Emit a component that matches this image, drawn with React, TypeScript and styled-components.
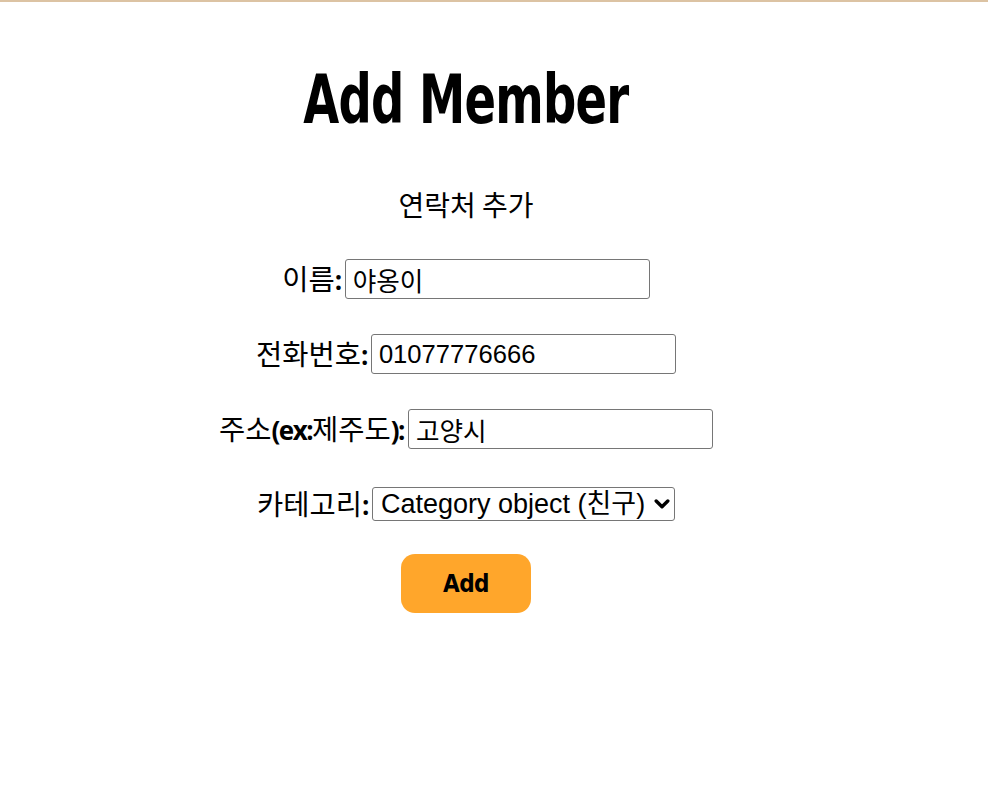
import React from "react";
import styled, { createGlobalStyle } from "styled-components";

const GlobalStyle = createGlobalStyle`
  html, body { margin: 0; padding: 0; background: #ffffff; }
  body { font-family: "Noto Sans CJK KR", "Noto Sans", sans-serif; color: #000; }
`;

const Screen = styled.div`
  border-top: 2px solid #dcc3a3;
  min-height: 800px;
`;

const Page = styled.div`
  width: 932px;
  display: flex;
  flex-direction: column;
  align-items: center;
`;

const Title = styled.h1`
  margin: 62px 0 0;
  font-family: "DejaVu Sans Condensed", "DejaVu Sans", sans-serif;
  font-stretch: condensed;
  font-weight: 700;
  font-size: 68px;
  line-height: 72px;
  letter-spacing: -1px;
  transform: scaleX(0.76);
  white-space: nowrap;
`;

const Form = styled.form`
  display: flex;
  flex-direction: column;
  align-items: center;
  margin-top: 50px;
`;

const Subtitle = styled.div`
  font-size: 28px;
  line-height: 36px;
  margin-bottom: 37px;
`;

const Row = styled.div`
  display: flex;
  align-items: center;
  gap: 4px;
  height: 40px;
  margin-bottom: 35px;
`;

const Label = styled.label`
  font-size: 28.5px;
  line-height: 40px;
  white-space: nowrap;
`;

const Latin = styled.span`
  font-family: "Open Sans", "Liberation Sans", sans-serif;
  font-weight: 700;
  font-size: 26px;
  letter-spacing: -1.5px;
`;

const Input = styled.input`
  box-sizing: border-box;
  width: 305px;
  height: 40px;
  border: 1px solid #767676;
  border-radius: 3px;
  padding: 0 7px;
  font-family: "Liberation Sans", "Noto Sans CJK KR", sans-serif;
  font-size: 25.6px;
  color: #000;
  background: #fff;
  outline: none;
`;

const SelectWrap = styled.div`
  position: relative;
  display: flex;
`;

const Select = styled.select`
  appearance: none;
  -webkit-appearance: none;
  box-sizing: border-box;
  width: 303px;
  height: 34px;
  border: 1px solid #767676;
  border-radius: 3px;
  padding: 0 26px 0 8px;
  font-family: "Liberation Sans", "Noto Sans CJK KR", sans-serif;
  font-size: 27px;
  color: #000;
  background: #fff;
`;

const Chevron = styled.svg`
  position: absolute;
  right: 5px;
  top: 50%;
  transform: translateY(-50%);
  pointer-events: none;
`;

const Button = styled.button`
  margin-top: -5px;
  width: 130px;
  height: 59px;
  border: none;
  border-radius: 14px;
  background: #ffa62b;
  font-family: "DejaVu Sans Condensed", "DejaVu Sans", sans-serif;
  font-stretch: condensed;
  font-weight: 700;
  font-size: 24px;
  letter-spacing: -0.5px;
  color: #000;
  cursor: pointer;
`;

export default function App() {
  return (
    <>
      <GlobalStyle />
      <Screen>
        <Page>
          <Title>Add Member</Title>
          <Form onSubmit={(e) => e.preventDefault()}>
            <Subtitle>연락처 추가</Subtitle>
            <Row>
              <Label>이름<Latin>:</Latin></Label>
              <Input defaultValue="야옹이" />
            </Row>
            <Row>
              <Label>전화번호<Latin>:</Latin></Label>
              <Input defaultValue="01077776666" />
            </Row>
            <Row>
              <Label>주소<Latin>(ex:</Latin>제주도<Latin>):</Latin></Label>
              <Input defaultValue="고양시" />
            </Row>
            <Row>
              <Label>카테고리<Latin>:</Latin></Label>
              <SelectWrap>
                <Select defaultValue="friend">
                  <option value="friend">Category object (친구)</option>
                </Select>
                <Chevron width="16" height="12" viewBox="0 0 16 12">
                  <path d="M2.2 3 L8 8.8 L13.8 3" fill="none" stroke="#000" strokeWidth="3.4" strokeLinecap="round" strokeLinejoin="round" />
                </Chevron>
              </SelectWrap>
            </Row>
            <Button type="submit">Add</Button>
          </Form>
        </Page>
      </Screen>
    </>
  );
}
